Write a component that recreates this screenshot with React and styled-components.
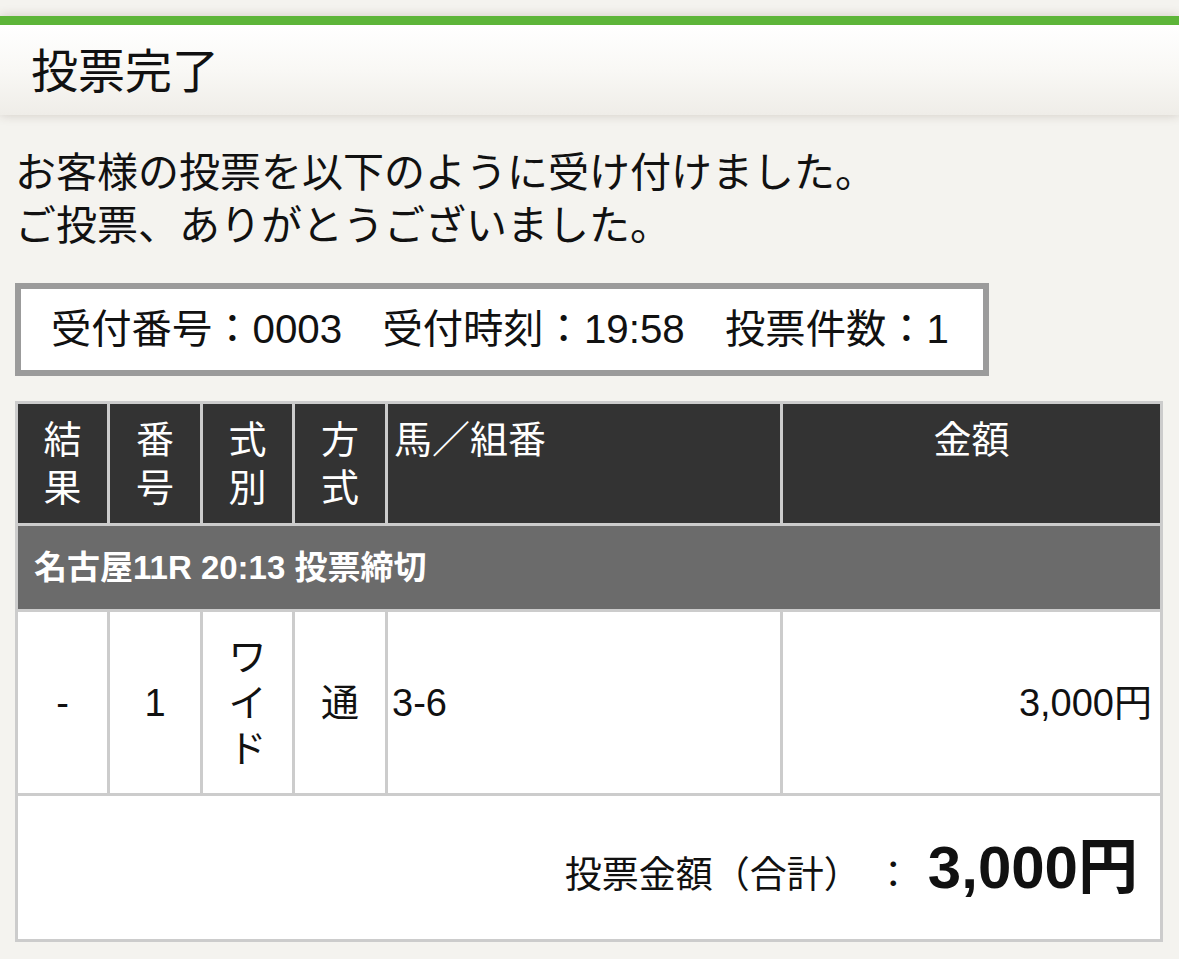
import React from "react";
import styled, { createGlobalStyle } from "styled-components";

const FONT = `"Liberation Sans", "Noto Sans CJK JP", sans-serif`;

const Global = createGlobalStyle`
  html, body {
    margin: 0;
    padding: 0;
    background: #f4f3ef;
  }
  body {
    font-family: ${FONT};
    color: #111;
    text-spacing-trim: space-all;
  }
`;

const Page = styled.div`
  padding-top: 16px;
  padding-bottom: 16px;
  min-height: 943px;
  box-sizing: border-box;
`;

const TitleBar = styled.header`
  height: 90px;
  border-top: 9px solid #5db539;
  background: linear-gradient(to bottom, #ffffff 0%, #f9f8f5 50%, #efede8 100%);
  box-shadow: 0 0 10px rgba(80, 60, 40, 0.22);
  display: flex;
  align-items: center;
  padding-left: 31px;
`;

const Title = styled.h1`
  margin: 0;
  font-size: 47px;
  font-weight: normal;
  line-height: 1;
  color: #111;
  padding-top: 2px;
`;

const Content = styled.main`
  margin: 0 16px 0 15px;
`;

const Message = styled.p`
  margin: 32px 0 0 0;
  font-size: 41px;
  line-height: 53px;
`;

const InfoBox = styled.div`
  display: inline-block;
  margin-top: 30px;
  border: 6px solid #9b9b9b;
  background: #fff;
  height: 81px;
  padding: 0 34px 0 30px;
  font-size: 40.3px;
  line-height: 81px;
  white-space: pre;
`;

const Table = styled.table`
  margin-top: 25px;
  width: 1148px;
  table-layout: fixed;
  border-collapse: separate;
  border-spacing: 3px;
  background: #cccccc;
`;

const HeadCell = styled.th`
  background: #333333;
  color: #fff;
  font-weight: normal;
  font-size: 38px;
  line-height: 48px;
  vertical-align: top;
  padding: 12px ${(p) => (p.$align === "left" ? "6px" : "0")} 11px;
  text-align: ${(p) => p.$align || "center"};
`;

const RaceCell = styled.td`
  background: #6b6b6b;
  color: #fff;
  font-weight: bold;
  font-size: 33px;
  line-height: 44px;
  padding: 20px 16px 19px;
`;

const DataCell = styled.td`
  background: #fff;
  font-size: 38px;
  line-height: 46px;
  vertical-align: middle;
  padding: 22px ${(p) => (p.$align === "right" ? "8px" : p.$align === "left" ? "4px" : "0")} 21px;
  text-align: ${(p) => p.$align || "center"};
`;

const TotalCell = styled.td`
  background: #fff;
  padding: 36px 22px 36px 0;
`;

const TotalLine = styled.div`
  display: flex;
  justify-content: flex-end;
  align-items: baseline;
`;

const TotalLabel = styled.span`
  font-size: 37px;
`;

const TotalColon = styled.span`
  font-size: 37px;
  margin: 0 16px 0 14px;
`;

const TotalAmount = styled.span`
  font-size: 60px;
  font-weight: bold;
  line-height: 71px;
`;

export default function App() {
  return (
    <>
      <Global />
      <Page>
        <TitleBar>
          <Title>投票完了</Title>
        </TitleBar>
        <Content>
          <Message>
            お客様の投票を以下のように受け付けました。
            <br />
            ご投票、ありがとうございました。
          </Message>
          <InfoBox>{"受付番号：0003　受付時刻：19:58　投票件数：1"}</InfoBox>
          <Table>
            <colgroup>
              <col style={{ width: 89 }} />
              <col style={{ width: 90 }} />
              <col style={{ width: 89 }} />
              <col style={{ width: 90 }} />
              <col style={{ width: 392 }} />
              <col style={{ width: 377 }} />
            </colgroup>
            <thead>
              <tr>
                <HeadCell>結<br />果</HeadCell>
                <HeadCell>番<br />号</HeadCell>
                <HeadCell>式<br />別</HeadCell>
                <HeadCell>方<br />式</HeadCell>
                <HeadCell $align="left">馬／組番</HeadCell>
                <HeadCell>金額</HeadCell>
              </tr>
            </thead>
            <tbody>
              <tr>
                <RaceCell colSpan={6}>名古屋11R 20:13 投票締切</RaceCell>
              </tr>
              <tr>
                <DataCell>-</DataCell>
                <DataCell>1</DataCell>
                <DataCell>ワ<br />イ<br />ド</DataCell>
                <DataCell>通</DataCell>
                <DataCell $align="left">3-6</DataCell>
                <DataCell $align="right">3,000円</DataCell>
              </tr>
              <tr>
                <TotalCell colSpan={6}>
                  <TotalLine>
                    <TotalLabel>投票金額（合計）</TotalLabel>
                    <TotalColon>：</TotalColon>
                    <TotalAmount>3,000円</TotalAmount>
                  </TotalLine>
                </TotalCell>
              </tr>
            </tbody>
          </Table>
        </Content>
      </Page>
    </>
  );
}
